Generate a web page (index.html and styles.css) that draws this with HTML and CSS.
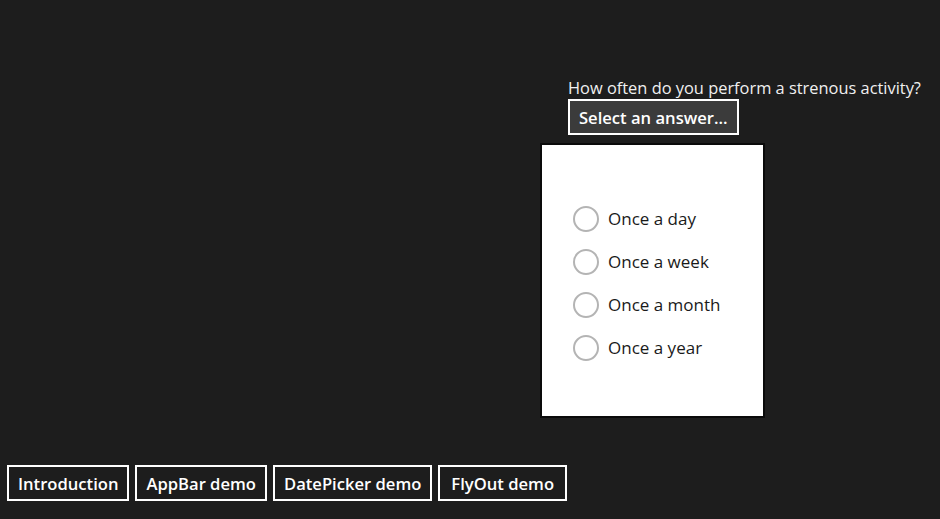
FILE: index.html
```html
<!DOCTYPE html>
<html>
<head>
<meta charset="utf-8">
<link rel="stylesheet" href="styles.css">
</head>
<body>
<div class="page">
  <main class="content">
    <div class="question">
      <div class="question-label">How often do you perform a strenous activity?</div>
      <button class="select-btn">Select an answer...</button>
    </div>
  </main>
  <nav class="nav">
    <button class="nav-btn">Introduction</button>
    <button class="nav-btn">AppBar demo</button>
    <button class="nav-btn">DatePicker demo</button>
    <button class="nav-btn nav-btn-wide">FlyOut demo</button>
  </nav>
  <div class="flyout">
    <ul class="options">
      <li class="option"><span class="radio"></span><span class="option-text">Once a day</span></li>
      <li class="option"><span class="radio"></span><span class="option-text">Once a week</span></li>
      <li class="option"><span class="radio"></span><span class="option-text">Once a month</span></li>
      <li class="option"><span class="radio"></span><span class="option-text">Once a year</span></li>
    </ul>
  </div>
</div>
</body>
</html>
```
FILE: styles.css
```css
html, body {
  margin: 0;
  padding: 0;
  height: 100%;
  background: #1d1d1d;
  font-family: "Open Sans", "Noto Sans", sans-serif;
}
.page {
  position: relative;
  height: 519px;
  display: flex;
  flex-direction: column;
}
.content {
  flex: 1;
}
.question {
  margin: 77px 0 0 568px;
  display: flex;
  flex-direction: column;
  align-items: flex-start;
}
.question-label {
  color: #f0f0f0;
  font-size: 16.4px;
  line-height: 22px;
  white-space: nowrap;
}
.select-btn {
  height: 36px;
  padding: 0 9px;
  background: #3b3b3b;
  border: 2px solid #ffffff;
  color: #ffffff;
  font-family: "Open Sans", "Noto Sans", sans-serif;
  font-weight: 600;
  font-size: 16.6px;
  white-space: nowrap;
}
.nav {
  display: flex;
  gap: 6px;
  padding: 0 0 18px 7px;
}
.nav-btn {
  height: 36px;
  padding: 0 9px;
  background: #1d1d1d;
  border: 2px solid #ffffff;
  color: #ffffff;
  font-family: "Open Sans", "Noto Sans", sans-serif;
  font-weight: 600;
  font-size: 16.6px;
  white-space: nowrap;
}
.nav-btn-wide {
  padding: 0 11px;
}
.flyout {
  position: absolute;
  left: 540px;
  top: 143px;
  width: 221px;
  height: 271px;
  background: #ffffff;
  border: 2px solid #0a0a0a;
}
.options {
  list-style: none;
  margin: 0;
  padding: 61px 0 0 31px;
  display: flex;
  flex-direction: column;
  gap: 17px;
}
.option {
  display: flex;
  align-items: center;
  height: 26px;
}
.radio {
  width: 22px;
  height: 22px;
  border: 2px solid #b4b4b4;
  border-radius: 50%;
  box-sizing: content-box;
  flex: none;
}
.option-text {
  margin-left: 9px;
  color: #1a1a1a;
  font-size: 17px;
  line-height: 26px;
}
```
